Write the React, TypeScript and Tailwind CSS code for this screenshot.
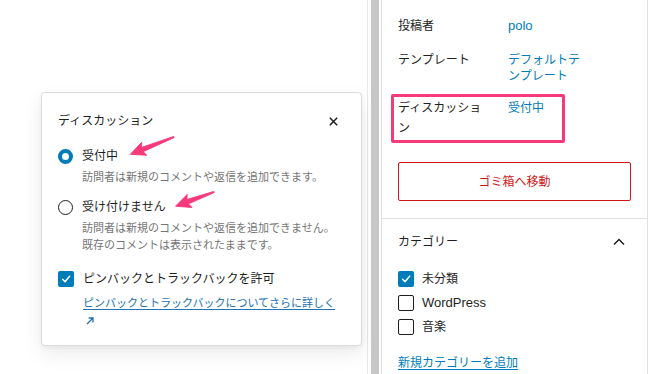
import React from 'react';

const FONT = { fontFamily: '"Liberation Sans", "Noto Sans CJK JP", sans-serif' };

const Radio: React.FC<{ checked?: boolean }> = ({ checked }) =>
  checked ? (
    <span className="w-[15px] h-[15px] rounded-full border-[4.5px] border-[#007cba] bg-white shrink-0" />
  ) : (
    <span className="w-[15px] h-[15px] rounded-full border-[1.5px] border-[#1e1e1e] bg-white shrink-0" />
  );

const Check: React.FC<{ checked?: boolean }> = ({ checked }) =>
  checked ? (
    <span className="w-[16px] h-[16px] rounded-[2px] bg-[#007cba] flex items-center justify-center shrink-0">
      <svg width="12" height="12" viewBox="0 0 12 12" fill="none">
        <path d="M2.6 6.3 L5 8.7 L9.6 3.2" stroke="white" strokeWidth="1.5" strokeLinecap="round" strokeLinejoin="round" />
      </svg>
    </span>
  ) : (
    <span className="w-[16px] h-[16px] rounded-[2px] border-[1.5px] border-[#1e1e1e] bg-white shrink-0" />
  );

// annotation arrow drawn pointing right, rotated into place
const PinkArrow: React.FC<{ x: number; y: number; len: number; angle: number }> = ({ x, y, len, angle }) => {
  const L = len;
  const pts = `0,-0.6 ${L - 13},-2.3 ${L - 15},-7 ${L},0 ${L - 15},7 ${L - 13},2.3 0,0.6`;
  return <polygon points={pts} fill="#f5397b" stroke="#f5397b" strokeWidth="0.8" strokeLinejoin="round" transform={`translate(${x},${y}) rotate(${angle})`} />;
};

export default function App() {
  return (
    <div className="relative flex w-[651px] h-[374px] bg-white overflow-hidden text-[#1e1e1e]" style={FONT}>
      {/* editor canvas + popover */}
      <div className="w-[368px] shrink-0 border-r border-[#e8e8e8] pt-[92px] pl-[41px]">
        <div className="w-[321px] bg-white border border-[#dcdcdc] rounded-[4px] shadow-[0_2px_4px_rgba(0,0,0,0.05),0_8px_20px_rgba(0,0,0,0.08)] px-[16px] pt-[18px] pb-[16px]">
          <div className="flex items-center justify-between h-[20px]">
            <span className="text-[12px] leading-[20px]">ディスカッション</span>
            <svg width="9" height="9" viewBox="0 0 9 9" className="mr-[7px]">
              <path d="M0.8 0.8 L8.2 8.2 M8.2 0.8 L0.8 8.2" stroke="#1e1e1e" strokeWidth="1.5" />
            </svg>
          </div>

          <div className="flex items-center gap-[9px] h-[20px] mt-[15px]">
            <Radio checked />
            <span className="text-[12px] leading-[20px]">受付中</span>
          </div>
          <div className="pl-[24px] mt-[3px] text-[11px] leading-[17px] text-[#757575]">
            訪問者は新規のコメントや返信を追加できます。
          </div>

          <div className="flex items-center gap-[9px] h-[20px] mt-[11px]">
            <Radio />
            <span className="text-[12px] leading-[20px]">受け付けません</span>
          </div>
          <div className="pl-[24px] mt-[3px] text-[11px] leading-[17px] text-[#757575]">
            訪問者は新規のコメントや返信を追加できません。
            <br />
            既存のコメントは表示されたままです。
          </div>

          <div className="flex items-center gap-[9px] h-[20px] mt-[15px]">
            <Check checked />
            <span className="text-[12px] leading-[20px]">ピンバックとトラックバックを許可</span>
          </div>
          <div className="pl-[25px] mt-[6px] text-[11px] leading-[17px] text-[#2271b1] whitespace-nowrap">
            <span className="underline underline-offset-2">ピンバックとトラックバックについてさらに詳しく</span>
            <br />
            <svg width="8" height="8" viewBox="0 0 8 8" className="inline-block ml-[3px]">
              <path d="M1 7 L7 1 M2.6 1 H7 V5.4" stroke="#2271b1" strokeWidth="1.3" fill="none" />
            </svg>
          </div>
        </div>
      </div>

      <div className="w-[3px] shrink-0" />
      <div className="w-[8px] shrink-0 bg-[#c7c7c7]" />
      <div className="w-[2px] shrink-0" />

      {/* settings sidebar */}
      <div className="w-[267px] shrink-0 border-x border-[#e0e0e0]">
        <div className="px-[16px] pt-[16px] pb-[17px] border-b border-[#e0e0e0]">
          <div className="flex flex-col gap-[14px]">
            <div className="flex items-start">
              <span className="w-[110px] pr-[20px] text-[12px] leading-[20px]">投稿者</span>
              <span className="w-[78px] pt-[2px] text-[13px] leading-[16px] text-[#007cba]">polo</span>
            </div>
            <div className="flex items-start">
              <span className="w-[110px] pr-[20px] text-[12px] leading-[20px]">テンプレート</span>
              <span className="w-[78px] pt-[2px] text-[12px] leading-[16px] text-[#007cba]">デフォルトテンプレート</span>
            </div>
            <div className="relative flex items-start">
              <span className="w-[110px] pr-[20px] text-[12px] leading-[20px]">ディスカッション</span>
              <span className="w-[78px] pt-[2px] text-[12px] leading-[16px] text-[#007cba]">受付中</span>
              <div className="absolute left-[-7px] top-[-4px] w-[174px] h-[49px] border-[3px] border-[#f5397b] rounded-[2px]" />
            </div>
          </div>
          <div className="mt-[24px] h-[39px] border border-[#cc1818] rounded-[2px] flex items-center justify-center text-[12px] text-[#cc1818]">
            ゴミ箱へ移動
          </div>
        </div>

        <div className="px-[16px] pt-[13px]">
          <div className="flex items-center justify-between h-[20px]">
            <span className="text-[12px] leading-[20px]">カテゴリー</span>
            <svg width="12" height="8" viewBox="0 0 12 8" className="mr-[6px]">
              <path d="M1 6.5 L6 1.5 L11 6.5" stroke="#1e1e1e" strokeWidth="1.5" fill="none" />
            </svg>
          </div>
          <div className="mt-[17px] flex flex-col gap-[4px]">
            <div className="flex items-center gap-[8px] h-[20px]">
              <Check checked />
              <span className="text-[12px] leading-[20px]">未分類</span>
            </div>
            <div className="flex items-center gap-[8px] h-[20px]">
              <Check />
              <span className="text-[13px] leading-[20px]">WordPress</span>
            </div>
            <div className="flex items-center gap-[8px] h-[20px]">
              <Check />
              <span className="text-[12px] leading-[20px]">音楽</span>
            </div>
          </div>
          <div className="mt-[16px] text-[12px] leading-[20px] text-[#007cba] underline underline-offset-2">
            新規カテゴリーを追加
          </div>
        </div>
      </div>

      {/* annotation arrows */}
      <svg className="absolute inset-0 pointer-events-none" width="651" height="374">
        <PinkArrow x={174} y={137} len={47} angle={158.4} />
        <PinkArrow x={214} y={192} len={41} angle={159.8} />
      </svg>
    </div>
  );
}
